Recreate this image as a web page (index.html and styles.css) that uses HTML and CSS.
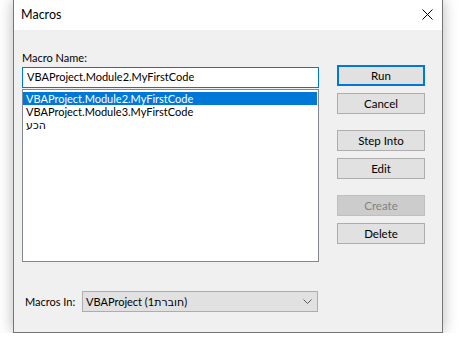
FILE: index.html
```html
<!DOCTYPE html>
<html lang="en">
<head>
    <meta charset="UTF-8">
    <title>Macros</title>
    <link rel="stylesheet" href="styles.css">
</head>
<body>
    <div class="dialog">
        <div class="titlebar">
            <span class="title">Macros</span>
            <svg class="close" width="11" height="11" viewBox="0 0 11 11">
                <path d="M0.5 0.5 L10.5 10.5 M10.5 0.5 L0.5 10.5" stroke="#000" stroke-width="1"/>
            </svg>
        </div>
        <div class="content">
            <div class="main">
                <div class="left">
                    <div class="label">Macro Name:</div>
                    <div class="name-input">VBAProject.Module2.MyFirstCode</div>
                    <ul class="macro-list">
                        <li class="selected">VBAProject.Module2.MyFirstCode</li>
                        <li>VBAProject.Module3.MyFirstCode</li>
                        <li>הכע</li>
                    </ul>
                </div>
                <div class="buttons">
                    <button class="btn default">Run</button>
                    <button class="btn">Cancel</button>
                    <button class="btn group">Step Into</button>
                    <button class="btn">Edit</button>
                    <button class="btn group" disabled>Create</button>
                    <button class="btn">Delete</button>
                </div>
            </div>
            <div class="macros-in">
                <span class="in-label">Macros In:</span>
                <div class="combo">
                    <span>VBAProject (חוברת1)</span>
                    <svg width="9" height="5" viewBox="0 0 9 5">
                        <path d="M0.5 0.5 L4.5 4.5 L8.5 0.5" fill="none" stroke="#5a5a5a" stroke-width="1"/>
                    </svg>
                </div>
            </div>
        </div>
    </div>
</body>
</html>
```

FILE: styles.css
```css
body {
    margin: 0;
    background: #ffffff;
    font-family: Lato, "DejaVu Sans", sans-serif;
    font-size: 11px;
    color: #000;
}
.dialog {
    margin-left: 13px;
    width: 430px;
    height: 333px;
    box-sizing: border-box;
    border: 1px solid #767676;
    border-top: none;
    background: #f0f0f0;
    box-shadow: 0 0 14px rgba(0, 0, 0, 0.28);
    display: flex;
    flex-direction: column;
}
.titlebar {
    height: 30px;
    background: #fff;
    display: flex;
    align-items: center;
    justify-content: space-between;
    padding: 0 9px 0 7px;
}
.title {
    font-size: 12.5px;
    margin-top: -2px;
}
.close {
    margin-top: -2px;
}
.content {
    padding: 20px 0 0 8px;
}
.main {
    display: flex;
    gap: 18px;
}
.left {
    width: 297px;
}
.label {
    height: 15px;
    line-height: 15px;
    margin-bottom: 2px;
    white-space: nowrap;
}
.name-input {
    height: 21px;
    box-sizing: border-box;
    border: 1px solid #0078d7;
    background: #fff;
    padding-left: 4px;
    line-height: 18px;
    white-space: nowrap;
}
.macro-list {
    list-style: none;
    margin: 1px 0 0 0;
    height: 173px;
    box-sizing: border-box;
    border: 1px solid #828790;
    background: #fff;
    padding: 2px 1px 0 0;
}
.macro-list li {
    height: 13px;
    line-height: 13px;
    padding-left: 3px;
    white-space: nowrap;
}
.macro-list li.selected {
    background: #0078d7;
    color: #fff;
}
.buttons {
    display: flex;
    flex-direction: column;
    gap: 7px;
    padding-top: 15px;
}
.btn {
    width: 88px;
    height: 21px;
    box-sizing: border-box;
    border: 1px solid #adadad;
    background: #e1e1e1;
    font-family: inherit;
    font-size: 11.5px;
    color: #000;
    padding: 0;
}
.btn.default {
    border: 2px solid #0078d7;
}
.btn.group {
    margin-top: 9px;
}
.btn:disabled {
    background: #cccccc;
    border-color: #bfbfbf;
    color: #838383;
}
.macros-in {
    display: flex;
    align-items: center;
    margin-top: 29px;
}
.in-label {
    padding-left: 3px;
    width: 57px;
    white-space: nowrap;
}
.combo {
    width: 236px;
    height: 21px;
    box-sizing: border-box;
    border: 1px solid #adadad;
    background: #e1e1e1;
    display: flex;
    align-items: center;
    justify-content: space-between;
    padding: 0 5px 0 3px;
    white-space: nowrap;
}
```
